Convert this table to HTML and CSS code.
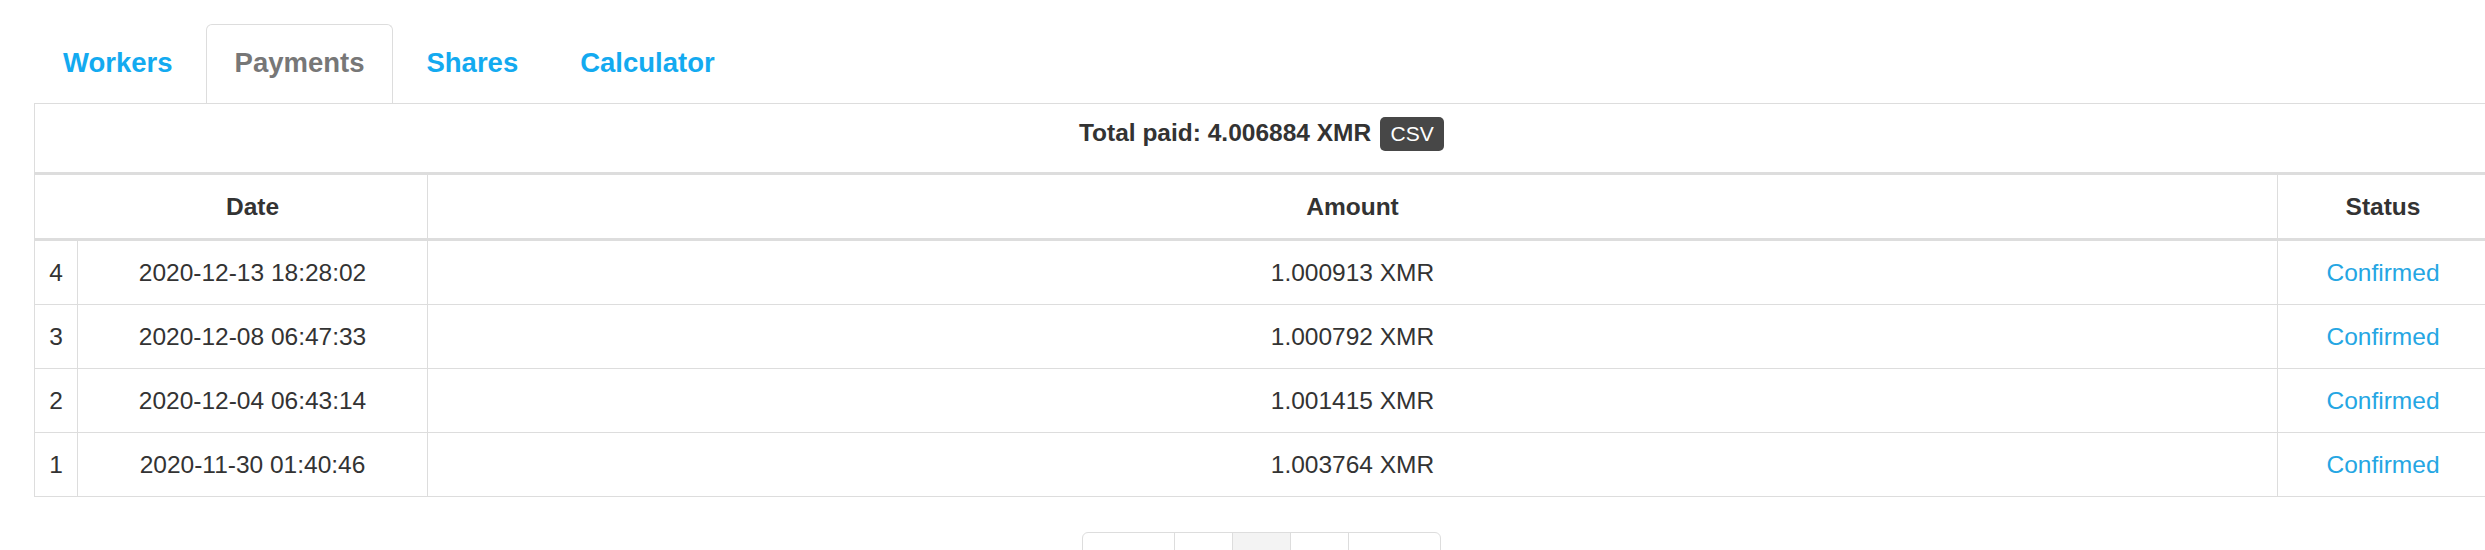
FILE: index.html
```html
<!DOCTYPE html>
<html>
<head>
<meta charset="utf-8">
<title>Payments</title>
<link rel="stylesheet" href="styles.css">
</head>
<body>
<div class="page">
  <ul class="tabs">
    <li class="tab"><a href="#">Workers</a></li>
    <li class="tab active"><a href="#">Payments</a></li>
    <li class="tab"><a href="#">Shares</a></li>
    <li class="tab"><a href="#">Calculator</a></li>
  </ul>
  <table class="payments">
    <colgroup>
      <col class="c-num">
      <col class="c-date">
      <col class="c-amount">
      <col class="c-status">
    </colgroup>
    <thead>
      <tr class="total-row">
        <th colspan="4" class="total">Total paid: 4.006884 XMR <span class="badge">CSV</span></th>
      </tr>
      <tr class="head-row">
        <th class="num-head"></th>
        <th class="date-head">Date</th>
        <th>Amount</th>
        <th class="last">Status</th>
      </tr>
    </thead>
    <tbody>
      <tr><td>4</td><td>2020-12-13 18:28:02</td><td>1.000913 XMR</td><td class="last"><a class="status" href="#">Confirmed</a></td></tr>
      <tr><td>3</td><td>2020-12-08 06:47:33</td><td>1.000792 XMR</td><td class="last"><a class="status" href="#">Confirmed</a></td></tr>
      <tr><td>2</td><td>2020-12-04 06:43:14</td><td>1.001415 XMR</td><td class="last"><a class="status" href="#">Confirmed</a></td></tr>
      <tr><td>1</td><td>2020-11-30 01:40:46</td><td>1.003764 XMR</td><td class="last"><a class="status" href="#">Confirmed</a></td></tr>
    </tbody>
  </table>
  <nav class="pager-wrap">
    <ul class="pager">
      <li class="pg wide">First</li>
      <li class="pg">&lsaquo;</li>
      <li class="pg active">1</li>
      <li class="pg">&rsaquo;</li>
      <li class="pg wide">Last</li>
    </ul>
  </nav>
</div>
</body>
</html>
```

FILE: styles.css
```css
html, body {
  margin: 0;
  padding: 0;
  overflow: hidden;
  background: #fff;
}
body {
  font-family: "Liberation Sans", Arial, Helvetica, sans-serif;
  color: #333;
}
.page {
  padding: 24px 0 0 34px;
  width: 2455px;
}
.tabs {
  list-style: none;
  margin: 0;
  padding: 0;
  display: flex;
  gap: 4px;
}
.tab a {
  display: block;
  padding: 18px 28px 20px;
  line-height: 40px;
  font-size: 27.5px;
  font-weight: bold;
  color: #13aaf0;
  text-decoration: none;
  border: 1px solid transparent;
  border-bottom: none;
  border-radius: 6px 6px 0 0;
}
.tab.active a {
  color: #777;
  border-color: #ddd;
  background: #fff;
}
.payments {
  width: 2455px;
  table-layout: fixed;
  border-collapse: separate;
  border-spacing: 0;
  border-top: 1px solid #ddd;
  border-left: 1px solid #ddd;
  font-size: 24.5px;
}
.c-num { width: 43px; }
.c-date { width: 350px; }
.c-amount { width: 1850px; }
.c-status { width: 211px; }
.payments th,
.payments td {
  padding: 0;
  text-align: center;
  vertical-align: middle;
  border-right: 1px solid #ddd;
  border-bottom: 1px solid #ddd;
  color: #333;
}
.payments th {
  font-weight: bold;
}
.total-row { height: 71px; }
.total-row th.total {
  border-bottom: 3px solid #ddd;
  padding-bottom: 6px;
}
.head-row { height: 66px; }
.head-row th {
  border-bottom: 3px solid #ddd;
}
.head-row th.num-head {
  border-right: none;
}
.payments tbody tr { height: 64px; }
.badge {
  display: inline-block;
  vertical-align: middle;
  background: #474747;
  color: #fff;
  font-weight: normal;
  font-size: 21px;
  height: 34px;
  line-height: 34px;
  padding: 0 10.5px;
  border-radius: 5px;
  margin-left: 2px;
  margin-top: -3px;
}
.status {
  color: #25a6e3;
  text-decoration: none;
}
.pager-wrap {
  display: flex;
  justify-content: center;
  margin-top: 35px;
}
.pager {
  list-style: none;
  margin: 0;
  padding: 0;
  display: flex;
  border: 1px solid #ddd;
  border-radius: 6px;
  overflow: hidden;
}
.pg {
  width: 57px;
  height: 56px;
  line-height: 56px;
  padding-top: 18px;
  text-align: center;
  font-size: 24px;
  color: #13aaf0;
  border-left: 1px solid #ddd;
}
.pg:first-child { border-left: none; }
.pg.wide { width: 91px; }
.pg.active {
  background: #f3f3f3;
  color: #333;
}
```
